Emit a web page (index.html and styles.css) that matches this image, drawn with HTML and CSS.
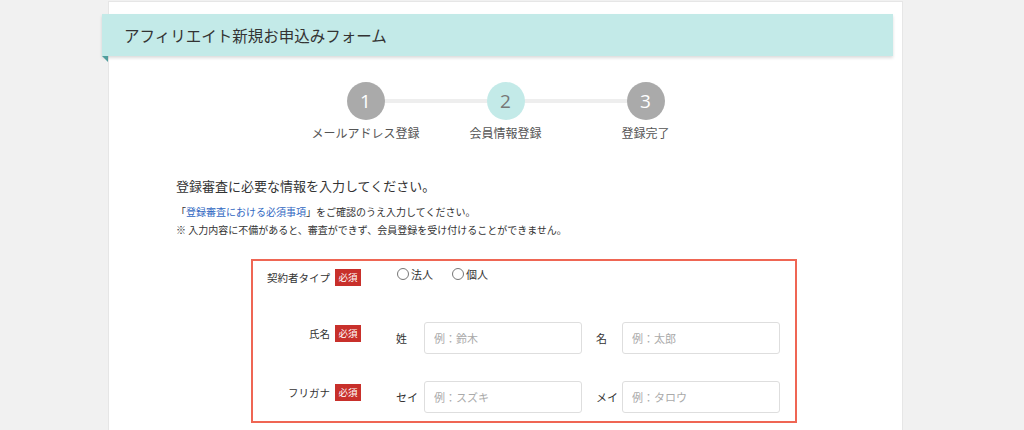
FILE: index.html
```html
<!DOCTYPE html>
<html lang="ja">
<head>
<meta charset="utf-8">
<link rel="stylesheet" href="styles.css">
</head>
<body>
<div class="card">
  <div class="header"><h1 class="title">アフィリエイト新規お申込みフォーム</h1></div>
  <div class="steps">
    <div class="step"><div class="num">1</div><div class="step-label">メールアドレス登録</div></div>
    <div class="step active"><div class="num">2</div><div class="step-label">会員情報登録</div></div>
    <div class="step"><div class="num">3</div><div class="step-label">登録完了</div></div>
  </div>
  <div class="intro">
    <p class="lead">登録審査に必要な情報を入力してください。</p>
    <p class="note">「<a class="link" href="#">登録審査における必須事項</a>」をご確認のうえ入力してください。</p>
    <p class="note">※ 入力内容に不備があると、審査ができず、会員登録を受け付けることができません。</p>
  </div>
  <div class="form">
    <div class="row row-type">
      <div class="label">契約者タイプ<span class="req">必須</span></div>
      <div class="radios">
        <label class="radio"><span class="dot"></span>法人</label>
        <label class="radio"><span class="dot"></span>個人</label>
      </div>
    </div>
    <div class="row row-name">
      <div class="label">氏名<span class="req">必須</span></div>
      <div class="fields">
        <span class="sub">姓</span><input class="input" placeholder="例：鈴木">
        <span class="sub sub2">名</span><input class="input" placeholder="例：太郎">
      </div>
    </div>
    <div class="row row-kana">
      <div class="label">フリガナ<span class="req">必須</span></div>
      <div class="fields">
        <span class="sub">セイ</span><input class="input" placeholder="例：スズキ">
        <span class="sub sub2">メイ</span><input class="input" placeholder="例：タロウ">
      </div>
    </div>
  </div>
</div>
</body>
</html>
```
FILE: styles.css
```css
html, body {
  margin: 0;
  padding: 0;
  background: #f1f1f1;
  font-family: "Noto Sans CJK JP", "Noto Sans", sans-serif;
  color: #333;
}
.card {
  margin: 1px 0 0 108px;
  width: 795px;
  height: 429px;
  background: #fff;
  border: 1px solid #e6e6e6;
  border-bottom: 0;
  padding-top: 12px;
  box-sizing: border-box;
}
.header {
  position: relative;
  margin-left: -7px;
  width: 791px;
  height: 42px;
  background: #c3eae8;
  box-shadow: 0 2px 3px rgba(0,0,0,0.14);
}
.header::after {
  content: "";
  position: absolute;
  left: 0;
  bottom: -6px;
  border-top: 6px solid #4f9d9d;
  border-left: 6px solid transparent;
}
.title {
  margin: 0;
  padding-left: 22px;
  font-size: 15.5px;
  font-weight: 400;
  line-height: 42px;
  color: #333;
}
.steps {
  position: relative;
  display: flex;
  justify-content: center;
  margin-top: 26px;
}
.steps::before {
  content: "";
  position: absolute;
  left: 50%;
  margin-left: -140px;
  width: 280px;
  top: 17px;
  height: 4px;
  background: #eeeeee;
}
.step {
  position: relative;
  width: 140px;
  display: flex;
  flex-direction: column;
  align-items: center;
}
.num {
  width: 38px;
  height: 38px;
  border-radius: 50%;
  background: #aaaaaa;
  color: #fff;
  font-family: "Open Sans", "Noto Sans", sans-serif;
  font-size: 19px;
  line-height: 38px;
  text-align: center;
}
.step.active .num {
  background: #c3eae8;
  color: #777;
}
.step-label {
  margin-top: 4px;
  font-size: 12px;
  line-height: 18px;
  color: #555;
}
.intro {
  padding-left: 67px;
  margin-top: 34px;
}
.lead {
  margin: 0 0 7px;
  font-size: 13px;
  line-height: 20px;
}
.note {
  margin: 0;
  font-size: 10px;
  line-height: 18px;
  color: #333;
}
.link {
  color: #2f67c2;
  text-decoration: none;
}
.form {
  margin: 20px 0 0 142px;
  width: 546px;
  height: 164px;
  border: 2px solid #ef6654;
  box-sizing: border-box;
  padding-top: 7px;
}
.row {
  display: flex;
}
.label {
  width: 108px;
  flex: none;
  display: flex;
  justify-content: flex-end;
  align-items: center;
  font-size: 10.5px;
  line-height: 17px;
  color: #333;
}
.req {
  margin-left: 5px;
  width: 26px;
  height: 17px;
  background: #c8302b;
  color: #fff;
  font-size: 9.5px;
  line-height: 17px;
  text-align: center;
}
.row-type .label { height: 18px; }
.radios {
  display: flex;
  margin-left: 36px;
  margin-top: -4px;
  height: 20px;
  align-items: center;
  gap: 19px;
}
.radio {
  display: flex;
  align-items: center;
  font-size: 11px;
  color: #333;
}
.dot {
  width: 10px;
  height: 10px;
  border: 1px solid #777;
  border-radius: 50%;
  margin-right: 2px;
}
.row-name { margin-top: 36px; }
.row-kana { margin-top: 27px; }
.row-name .label, .row-kana .label {
  align-self: flex-start;
  margin-top: 3px;
}
.fields {
  display: flex;
  align-items: center;
  margin-left: 35px;
}
.sub {
  width: 28px;
  font-size: 11px;
  color: #333;
}
.sub2 {
  margin-left: 14px;
  width: 26px;
}
.input {
  width: 158px;
  height: 32px;
  box-sizing: border-box;
  border: 1px solid #dedede;
  border-radius: 3px;
  padding: 0 9px;
  font-family: "Noto Sans CJK JP", "Noto Sans", sans-serif;
  font-size: 11px;
  color: #333;
  outline: none;
}
.input::placeholder { color: #aaa; }
```
